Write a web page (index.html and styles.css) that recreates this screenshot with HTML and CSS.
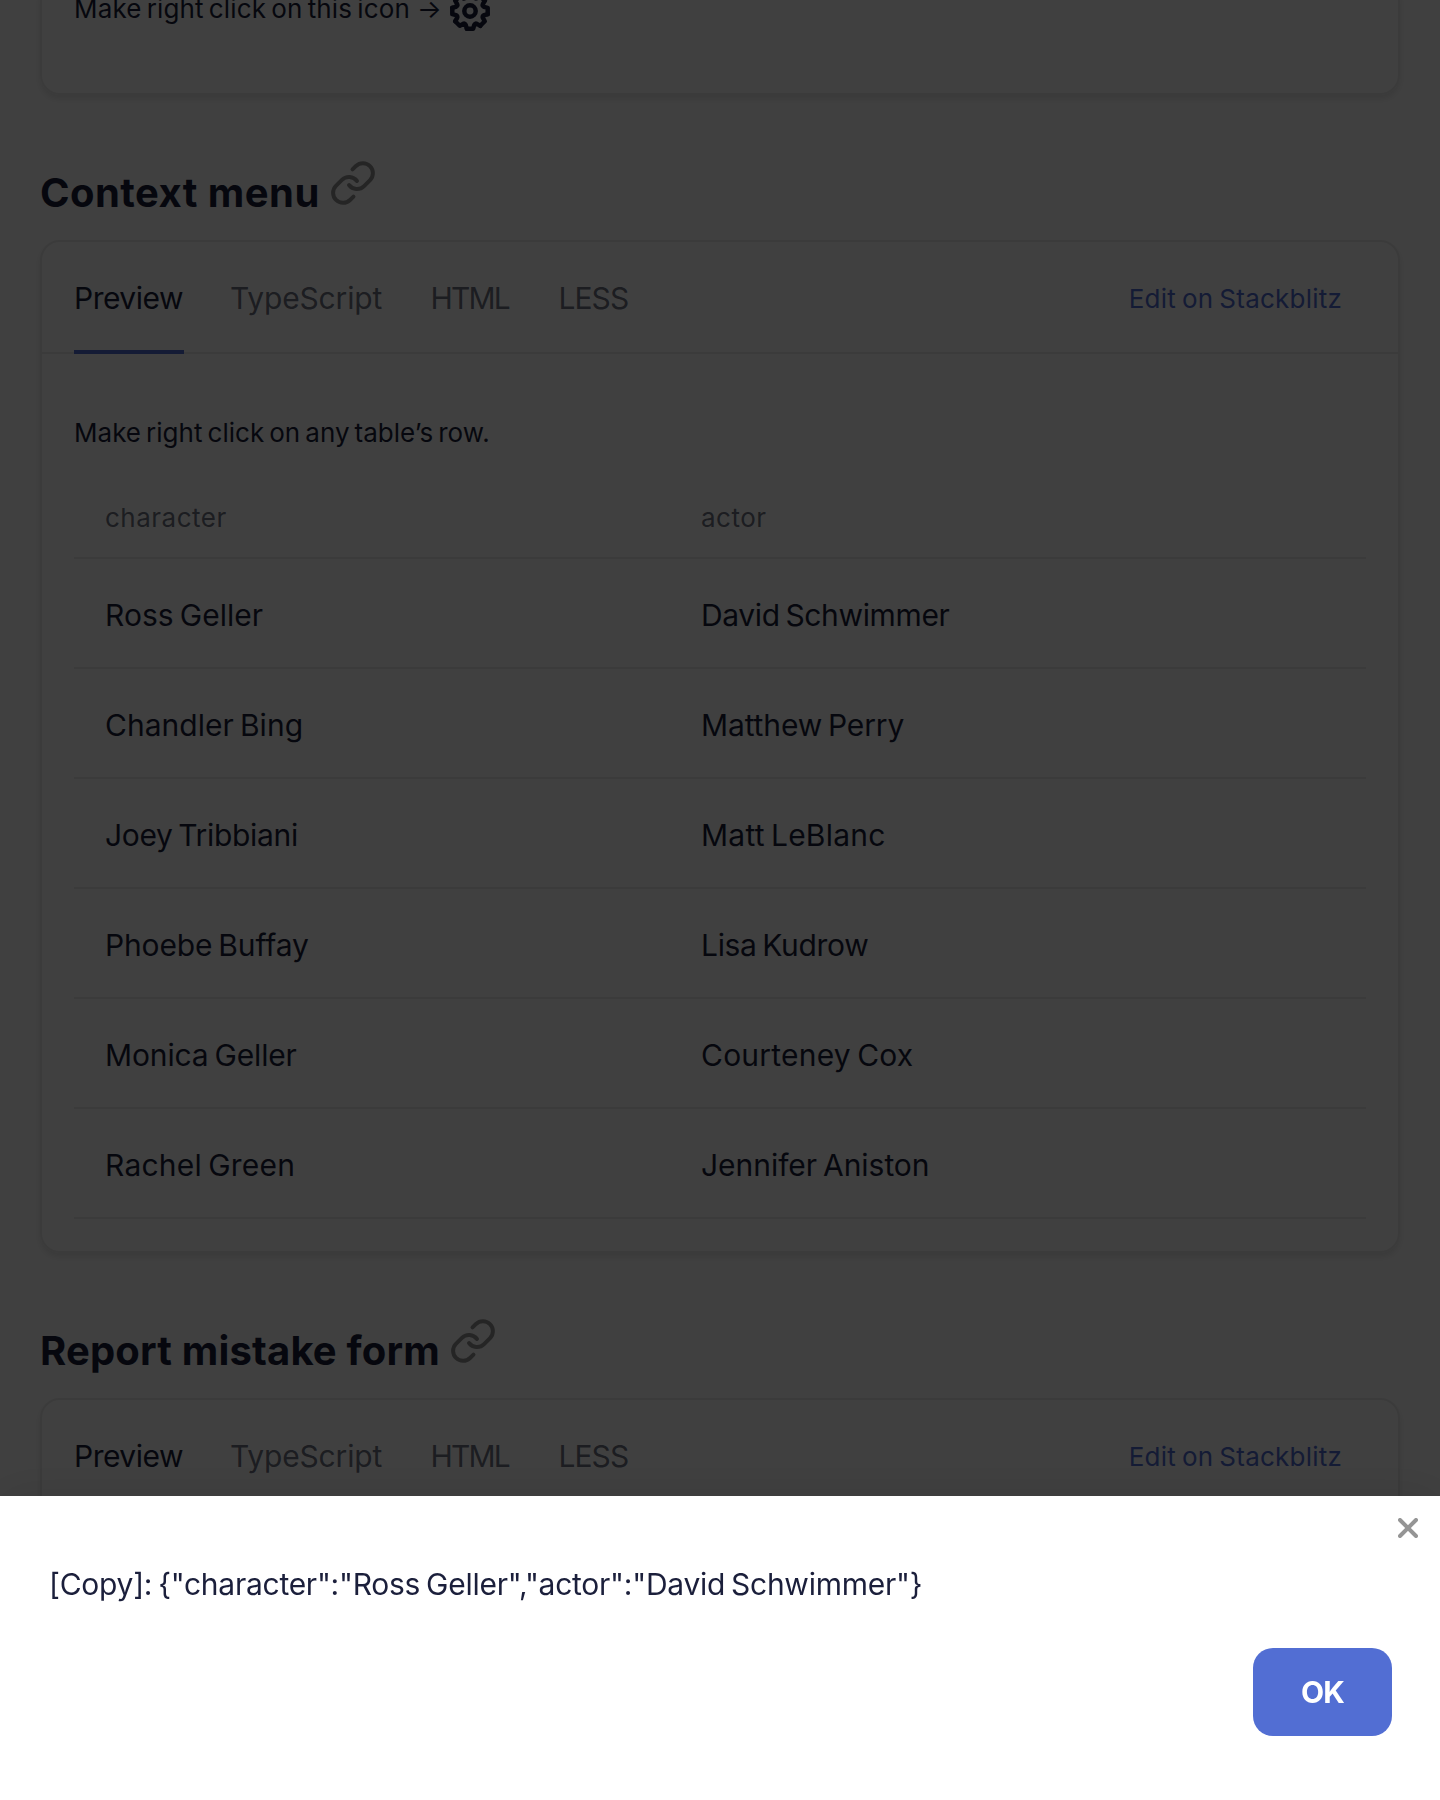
FILE: index.html
```
<!DOCTYPE html>
<html lang="en">
<head>
<meta charset="utf-8">
<title>Context menu</title>
<link rel="stylesheet" href="styles.css">
</head>
<body>
<svg class="sprite" aria-hidden="true">
  <symbol id="link" viewBox="0 0 24 24">
    <path d="M10 13a5 5 0 0 0 7.54.54l3-3a5 5 0 0 0-7.07-7.07l-1.72 1.71"/>
    <path d="M14 11a5 5 0 0 0-7.54-.54l-3 3a5 5 0 0 0 7.07 7.07l1.71-1.71"/>
  </symbol>
  <symbol id="gear" viewBox="-24 -24 48 48">
    <g id="teeth"><path d="M-3.2 17.7H3.2L4.2 14Q5 12 6.9 12.9L10.3 14.8"/>
    <path d="M-3.2 17.7H3.2L4.2 14Q5 12 6.9 12.9L10.3 14.8" transform="rotate(45)"/></g>
    <use href="#teeth" transform="rotate(90)"/>
    <use href="#teeth" transform="rotate(180)"/>
    <use href="#teeth" transform="rotate(270)"/>
    <circle r="5.7"/>
  </symbol>
</svg>
<main class="page">
  <section class="card card--scrolled">
    <div class="hint hint--icon"><span class="hint-text">Make right click on this icon</span><span class="arrow">→</span><svg class="icon gear"><use href="#gear"/></svg></div>
  </section>

  <h2 class="heading">Context menu<svg class="icon link-icon"><use href="#link"/></svg></h2>
  <section class="card">
    <header class="tabs">
      <span class="tab tab--active">Preview</span>
      <span class="tab tab--ts">TypeScript</span>
      <span class="tab tab--html">HTML</span>
      <span class="tab tab--less">LESS</span>
      <a class="edit">Edit on Stackblitz</a>
    </header>
    <div class="content">
      <p class="hint">Make right click on any table’s row.</p>
      <div class="table">
        <div class="row row--head"><span>character</span><span>actor</span></div>
        <div class="row"><span class="ls-a">Ross Geller</span><span class="ls-tight">David Schwimmer</span></div>
        <div class="row"><span class="ls-a">Chandler Bing</span><span class="ls-b">Matthew Perry</span></div>
        <div class="row"><span class="ls-c">Joey Tribbiani</span><span class="ls-wide">Matt LeBlanc</span></div>
        <div class="row"><span class="ls-b">Phoebe Buffay</span><span class="ls-c">Lisa Kudrow</span></div>
        <div class="row"><span class="ls-b">Monica Geller</span><span class="ls-wide">Courteney Cox</span></div>
        <div class="row"><span class="ls-wide">Rachel Green</span><span class="ls-d">Jennifer Aniston</span></div>
      </div>
    </div>
  </section>

  <h2 class="heading heading--report">Report mistake form<svg class="icon link-icon"><use href="#link"/></svg></h2>
  <section class="card">
    <header class="tabs">
      <span class="tab tab--active">Preview</span>
      <span class="tab tab--ts">TypeScript</span>
      <span class="tab tab--html">HTML</span>
      <span class="tab tab--less">LESS</span>
      <a class="edit">Edit on Stackblitz</a>
    </header>
    <div class="content"></div>
  </section>
</main>

<div class="overlay">
  <div class="sheet">
    <svg class="close" viewBox="0 0 20 20"><path d="M2 2L18 18M18 2L2 18"/></svg>
    <p class="message">[Copy]: {"character":"Ross Geller","actor":"David Schwimmer"}</p>
    <button class="ok">OK</button>
  </div>
</div>
</body>
</html>
```
FILE: styles.css
```
* { box-sizing: border-box; }
body {
  margin: 0;
  height: 1800px;
  overflow: hidden;
  background: #fff;
  color: #1b1f3b;
  font: 400 30px/1 Inter, "Liberation Sans", sans-serif;
}
p, h2 { margin: 0; }
.sprite { display: none; }
.icon {
  flex: none;
  width: 48px;
  height: 48px;
  fill: none;
  stroke: currentColor;
  stroke-linecap: round;
  stroke-linejoin: round;
}

.page {
  display: flex;
  flex-direction: column;
  height: 1800px;
  padding: 0 40px;
  overflow: hidden;
}
.card {
  flex: none;
  border: 2px solid #ebebeb;
  border-radius: 20px;
  box-shadow: 0 4px 6px rgba(0, 0, 0, .1);
}
.card--scrolled {
  height: 115px;
  margin-top: -20px;
  padding: 6px 32px;
}

.heading {
  display: flex;
  flex: none;
  height: 145px;
  font-size: 40px;
  font-weight: 700;
  line-height: 49px;
  padding-top: 73px;
  letter-spacing: .45px;
}
.heading--report { letter-spacing: .17px; }
.link-icon {
  margin: -9px 0 0 9px;
  color: #959595;
  stroke-width: 2;
}

.tabs {
  display: flex;
  gap: 48px;
  height: 112px;
  padding: 0 56px 0 32px;
  box-shadow: inset 0 -2px #ebebeb;
}
.tab {
  height: 112px;
  padding-top: 4px;
  line-height: 104px;
  color: rgba(27, 31, 59, .65);
  white-space: nowrap;
}
.tab--active {
  width: 110px;
  color: #1b1f3b;
  letter-spacing: -.5px;
  border-bottom: 4px solid #526ed3;
}
.tab--ts { width: 151px; letter-spacing: -.17px; text-indent: -2px; }
.tab--html { width: 79.5px; letter-spacing: -1.8px; text-indent: -.5px; }
.tab--less { letter-spacing: -.95px; }
.edit {
  margin-left: auto;
  padding-top: 4px;
  color: #526ed3;
  font-size: 26px;
  line-height: 105px;
  letter-spacing: .22px;
  word-spacing: -1.5px;
}

.content { padding: 58px 32px 32px; }
.hint {
  font-size: 26px;
  line-height: 41px;
  letter-spacing: .03px;
  word-spacing: -2.34px;
}
.hint--icon { display: flex; letter-spacing: .15px; }
.hint-text { width: 343px; white-space: nowrap; }
.arrow { width: 29px; }
.gear { margin-top: -1px; stroke-width: 4.5; }

.table { margin-top: 25px; }
.row {
  display: grid;
  grid-template-columns: 596px 1fr;
  height: 110px;
  padding-top: 4px;
  border-bottom: 2px solid #ebebeb;
  line-height: 104px;
  word-spacing: -2.4px;
}
.row span { padding-left: 31px; }
.row--head {
  height: 81px;
  padding-top: 0;
  color: rgba(27, 31, 59, .65);
  font-size: 26px;
  line-height: 79px;
  letter-spacing: .5px;
}
.ls-a { letter-spacing: .03px; }
.ls-b { letter-spacing: -.14px; }
.ls-c { letter-spacing: -.33px; }
.ls-d { letter-spacing: -.04px; }
.ls-tight { letter-spacing: -.36px; }
.ls-wide { letter-spacing: .22px; }

.overlay {
  position: fixed;
  inset: 0;
  display: flex;
  flex-direction: column;
  justify-content: flex-end;
  background: rgba(0, 0, 0, .75);
}
.sheet {
  position: relative;
  display: flex;
  flex-direction: column;
  gap: 40px;
  height: 304px;
  padding: 64px 48px;
  background: #fff;
  box-shadow: 0 0 48px rgba(0, 0, 0, .12);
}
.message {
  padding-left: 1px;
  line-height: 48px;
  letter-spacing: -.26px;
  word-spacing: -2.3px;
}
.ok {
  align-self: flex-end;
  width: 139px;
  height: 88px;
  padding: 0;
  border: 0;
  border-radius: 20px;
  background: #526ed3;
  color: #fff;
  font: 700 30px/88px Inter, "Liberation Sans", sans-serif;
  letter-spacing: -.8px;
}
.close {
  position: absolute;
  top: 22px;
  right: 22px;
  width: 20px;
  height: 20px;
  fill: none;
  stroke: #959595;
  stroke-width: 4;
  stroke-linecap: round;
}
```
